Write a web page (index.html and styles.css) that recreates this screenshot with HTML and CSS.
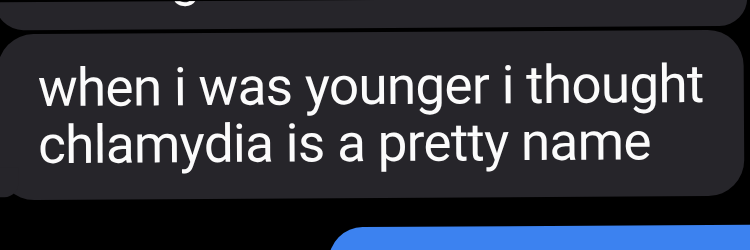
FILE: index.html
```html
<!DOCTYPE html>
<html>
<head>
<meta charset="utf-8">
<link rel="stylesheet" href="styles.css">
</head>
<body>
<div class="thread">
  <div class="bubble bubble-prev"><span class="prev-text">thing</span></div>
  <div class="bubble bubble-main">
    <p class="msg">when i was younger i thought<br>chlamydia is a pretty name</p>
    <span class="tail"></span>
  </div>
  <div class="bubble bubble-sent"></div>
</div>
</body>
</html>
```
FILE: styles.css
```css
html, body {
  margin: 0;
  padding: 0;
  background: #000;
  width: 750px;
  height: 250px;
  overflow: hidden;
}
.thread {
  display: flex;
  flex-direction: column;
  gap: 4px;
  height: 250px;
  transform: rotate(-0.35deg);
  transform-origin: 375px 125px;
  font-family: Roboto, "Noto Sans", sans-serif;
  color: #fbfbfb;
}
.bubble {
  background: #26252a;
  flex-shrink: 0;
}
.bubble-prev {
  height: 28px;
  margin: 0 2px 0 -4px;
  border-radius: 0 0 34px 34px;
  overflow: hidden;
  position: relative;
}
.prev-text {
  display: block;
  font-size: 53px;
  line-height: 57px;
  letter-spacing: -0.8px;
  margin-top: -57px;
  padding-left: 90px;
  position: relative;
  top: 5px;
}
.bubble-main {
  position: relative;
  margin: 0 6px 0 -2px;
  padding: 26px 16px 26px 40px;
  border-radius: 36px;
}
.msg {
  margin: 0;
  font-size: 53px;
  line-height: 57px;
  letter-spacing: -0.7px;
  white-space: nowrap;
}
.tail {
  position: absolute;
  left: -20px;
  bottom: 3px;
  width: 40px;
  height: 30px;
  background: #26252a;
  border-radius: 0 0 14px 0;
}
.bubble-sent {
  margin: 25px -30px 0 328px;
  height: 60px;
  background: #3c82f0;
  border-radius: 34px 0 0 0;
}
```
